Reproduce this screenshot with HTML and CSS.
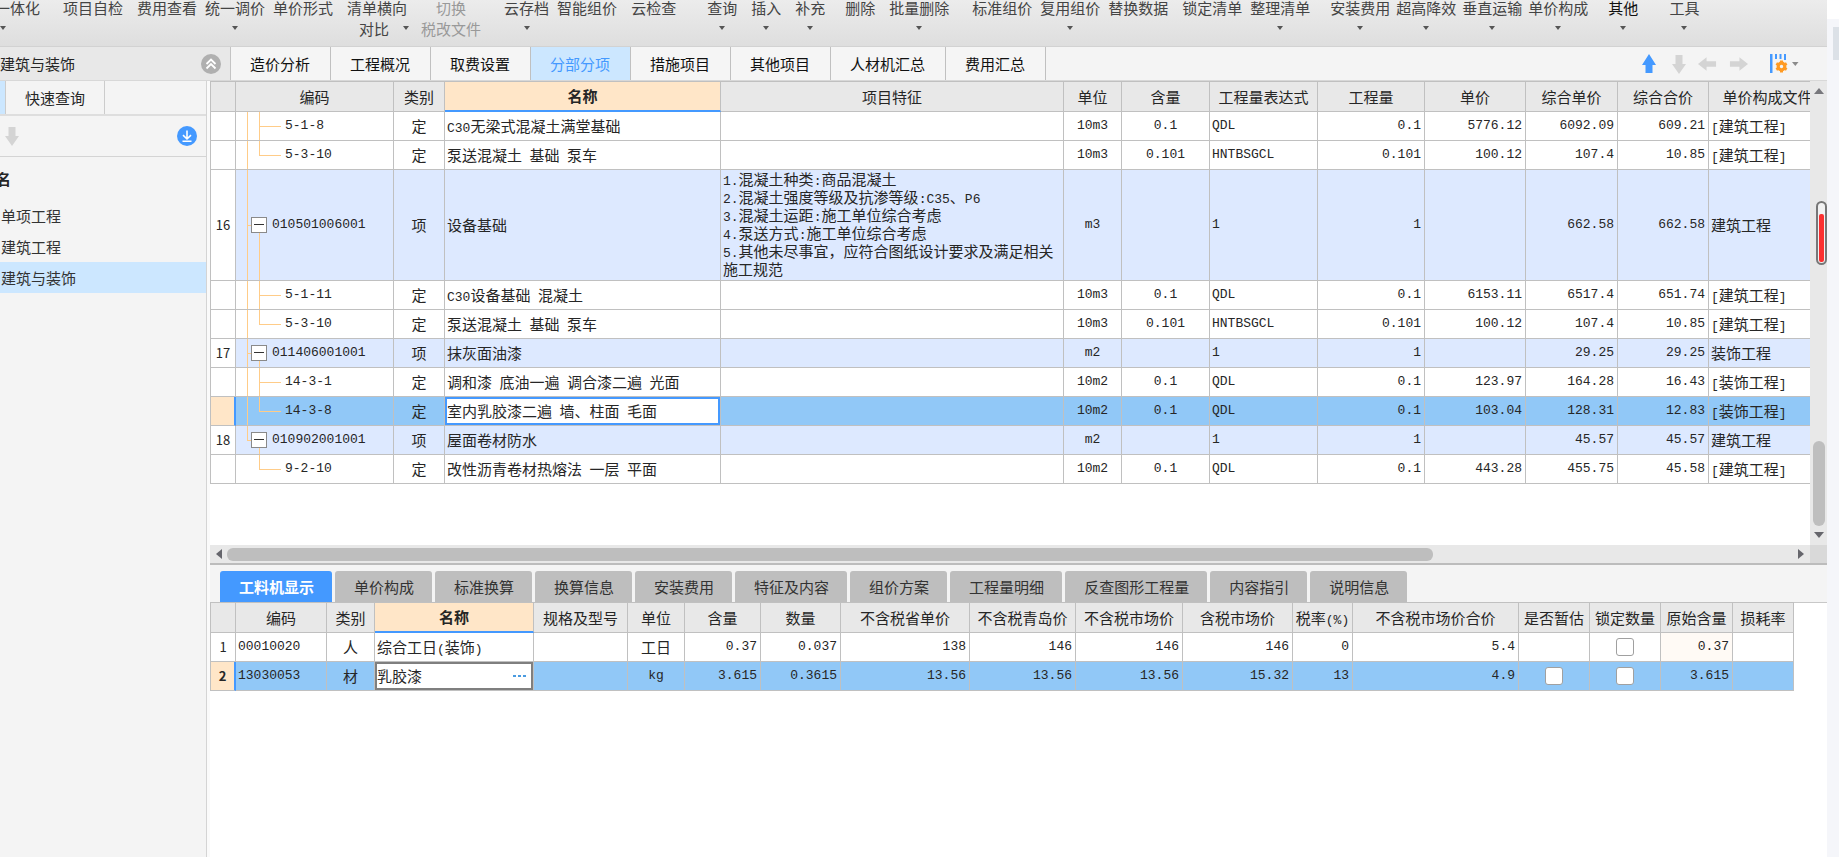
FILE: index.html
```html
<!DOCTYPE html>
<html lang="zh-CN">
<head>
<meta charset="utf-8">
<title>分部分项</title>
<link rel="stylesheet" href="styles.css">
</head>
<body>
<svg class="defs" width="0" height="0" aria-hidden="true">
  <symbol id="up" viewBox="0 0 14 20"><path d="M7 0 L14 11 H10.500 V19 H3.500 V11 H0 Z"/></symbol>
  <symbol id="down" viewBox="0 0 14 20"><path d="M7 20 L14 10 H10.500 V1 H3.500 V10 H0 Z"/></symbol>
  <symbol id="left" viewBox="0 0 20 14"><path d="M0 7 L9 0 V4 H19 V10 H9 V14 Z"/></symbol>
  <symbol id="right" viewBox="0 0 20 14"><path d="M20 7 L11 0 V4 H1 V10 H11 V14 Z"/></symbol>
</svg>
<div class="page">
<div class="app">
  <nav class="ribbon">
    <button>一体化<i class="caret early"></i></button>
    <button class="gm">项目自检</button>
    <button class="gs">费用查看</button>
    <button class="gb">统一调价<i class="caret"></i></button>
    <button class="gb">单价形式</button>
    <button class="gs two">清单横向<span class="second">对比<i class="caret beside"></i></span></button>
    <button class="gs" disabled>切换<span class="second">税改文件</span></button>
    <button class="gm">云存档<i class="caret"></i></button>
    <button class="gb">智能组价</button>
    <button class="gs">云检查</button>
    <button class="gl">查询<i class="caret"></i></button>
    <button class="gs">插入<i class="caret"></i></button>
    <button class="gs">补充<i class="caret"></i></button>
    <button class="gn">删除</button>
    <button class="gs">批量删除<i class="caret"></i></button>
    <button class="gm">标准组价</button>
    <button class="gb">复用组价<i class="caret"></i></button>
    <button class="gb">替换数据</button>
    <button class="gs">锁定清单</button>
    <button class="gb">整理清单<i class="caret"></i></button>
    <button class="gn">安装费用<i class="caret"></i></button>
    <button>超高降效<i class="caret"></i></button>
    <button>垂直运输<i class="caret"></i></button>
    <button>单价构成<i class="caret"></i></button>
    <button class="gn dark">其他<i class="caret"></i></button>
    <button class="gl">工具<i class="caret"></i></button>
  </nav>

  <div class="tabbar">
    <div class="project">
      <span>建筑与装饰</span>
      <button aria-label="收起"><svg width="20" height="20" viewBox="0 0 20 20"><circle cx="10" cy="10" r="10" fill="#b0b0b0"/><path d="M5.500 10 L10 5.500 L14.500 10 M5.500 14.500 L10 10 L14.500 14.500" fill="none" stroke="#fff" stroke-width="1.800"/></svg></button>
    </div>
    <div class="tabs">
      <button>造价分析</button><button>工程概况</button><button>取费设置</button><button class="on">分部分项</button><button>措施项目</button><button>其他项目</button><button>人材机汇总</button><button>费用汇总</button>
    </div>
    <div class="tools">
      <button class="blue" aria-label="上移"><svg width="14" height="20"><use href="#up"/></svg></button>
      <button aria-label="下移"><svg width="14" height="20"><use href="#down"/></svg></button>
      <button aria-label="左移"><svg width="19" height="14"><use href="#left"/></svg></button>
      <button aria-label="右移"><svg width="19" height="14"><use href="#right"/></svg></button>
      <button class="setup" aria-label="列设置"><svg width="29" height="20" viewBox="0 0 29 20"><path d="M0 0h2.500v19H0zM5 0h2v5H5zM9.500 0h2v5h-2zM14 0h2v6h-2z" fill="#49f"/><circle cx="11.500" cy="12.500" r="3.300" fill="none" stroke="#ff9a22" stroke-width="3.200"/><path d="M11.500 6.500v2.500M11.500 16v2.500M6.300 9.500l2.200 1.200M14.500 14.300l2.200 1.200M6.300 15.500l2.200-1.200M14.500 10.700l2.200-1.200" stroke="#ff9a22" stroke-width="3"/><path d="M22 8h6.500l-3.200 4z" fill="#8a8a8a"/></svg></button>
    </div>
  </div>

  <div class="work">
    <aside class="side">
      <div class="sidetabs"><span class="prev"></span><button>快速查询</button></div>
      <div class="sidetools">
        <button aria-label="下移"><svg width="14" height="20"><use href="#down"/></svg></button>
        <button aria-label="展开"><svg width="20" height="20" viewBox="0 0 20 20"><circle cx="10" cy="10" r="10" fill="#49f"/><path d="M10 4.500V13M6 9.200L10 13L14 9.200M5.500 15.200H14.500" fill="none" stroke="#fff" stroke-width="1.600"/></svg></button>
      </div>
      <h2>名</h2>
      <ul>
        <li><a href="#">单项工程</a></li>
        <li><a href="#">建筑工程</a></li>
        <li><a href="#" class="on">建筑与装饰</a></li>
      </ul>
    </aside>

    <main>
      <section class="upper">
        <div class="gridwrap">
          <table class="bill">
            <colgroup><col class="c-no"><col class="c-code"><col class="c-kind"><col class="c-name"><col class="c-feat"><col class="c-unit"><col class="c-cont"><col class="c-expr"><col class="c-qty"><col class="c-price"><col class="c-comp"><col class="c-total"><col class="c-file"></colgroup>
            <thead><tr><th></th><th>编码</th><th>类别</th><th class="on">名称</th><th>项目特征</th><th>单位</th><th>含量</th><th>工程量表达式</th><th>工程量</th><th>单价</th><th>综合单价</th><th>综合合价</th><th>单价构成文件</th></tr></thead>
            <tbody>
              <tr><td class="no"></td><td class="n kid">5-1-8</td><td class="c">定</td><td><span class="n">C30</span>无梁式混凝土满堂基础</td><td></td><td class="n c">10m3</td><td class="n c">0.1</td><td class="n">QDL</td><td class="n r">0.1</td><td class="n r">5776.12</td><td class="n r">6092.09</td><td class="n r">609.21</td><td><span class="n">[</span>建筑工程<span class="n">]</span></td></tr>
              <tr><td class="no"></td><td class="n kid end">5-3-10</td><td class="c">定</td><td>泵送混凝土&ensp;基础&ensp;泵车</td><td></td><td class="n c">10m3</td><td class="n c">0.101</td><td class="n">HNTBSGCL</td><td class="n r">0.101</td><td class="n r">100.12</td><td class="n r">107.4</td><td class="n r">10.85</td><td><span class="n">[</span>建筑工程<span class="n">]</span></td></tr>
              <tr class="item"><td class="no">16</td><td class="n node"><button aria-label="折叠"></button>010501006001</td><td class="c">项</td><td>设备基础</td><td class="feat"><span class="n">1.</span>混凝土种类<span class="n">:</span>商品混凝土<br><span class="n">2.</span>混凝土强度等级及抗渗等级<span class="n">:C35</span>、<span class="n">P6</span><br><span class="n">3.</span>混凝土运距<span class="n">:</span>施工单位综合考虑<br><span class="n">4.</span>泵送方式<span class="n">:</span>施工单位综合考虑<br><span class="n">5.</span>其他未尽事宜，应符合图纸设计要求及满足相关施工规范</td><td class="n c">m3</td><td></td><td class="n">1</td><td class="n r">1</td><td></td><td class="n r">662.58</td><td class="n r">662.58</td><td>建筑工程</td></tr>
              <tr><td class="no"></td><td class="n kid">5-1-11</td><td class="c">定</td><td><span class="n">C30</span>设备基础&ensp;混凝土</td><td></td><td class="n c">10m3</td><td class="n c">0.1</td><td class="n">QDL</td><td class="n r">0.1</td><td class="n r">6153.11</td><td class="n r">6517.4</td><td class="n r">651.74</td><td><span class="n">[</span>建筑工程<span class="n">]</span></td></tr>
              <tr><td class="no"></td><td class="n kid end">5-3-10</td><td class="c">定</td><td>泵送混凝土&ensp;基础&ensp;泵车</td><td></td><td class="n c">10m3</td><td class="n c">0.101</td><td class="n">HNTBSGCL</td><td class="n r">0.101</td><td class="n r">100.12</td><td class="n r">107.4</td><td class="n r">10.85</td><td><span class="n">[</span>建筑工程<span class="n">]</span></td></tr>
              <tr class="item"><td class="no">17</td><td class="n node"><button aria-label="折叠"></button>011406001001</td><td class="c">项</td><td>抹灰面油漆</td><td></td><td class="n c">m2</td><td></td><td class="n">1</td><td class="n r">1</td><td></td><td class="n r">29.25</td><td class="n r">29.25</td><td>装饰工程</td></tr>
              <tr><td class="no"></td><td class="n kid">14-3-1</td><td class="c">定</td><td>调和漆&ensp;底油一遍&ensp;调合漆二遍&ensp;光面</td><td></td><td class="n c">10m2</td><td class="n c">0.1</td><td class="n">QDL</td><td class="n r">0.1</td><td class="n r">123.97</td><td class="n r">164.28</td><td class="n r">16.43</td><td><span class="n">[</span>装饰工程<span class="n">]</span></td></tr>
              <tr class="sel"><td class="no"></td><td class="n kid end">14-3-8</td><td class="c">定</td><td class="edit"><input type="text" aria-label="名称" value="室内乳胶漆二遍&ensp;墙、柱面&ensp;毛面"></td><td></td><td class="n c">10m2</td><td class="n c">0.1</td><td class="n">QDL</td><td class="n r">0.1</td><td class="n r">103.04</td><td class="n r">128.31</td><td class="n r">12.83</td><td><span class="n">[</span>装饰工程<span class="n">]</span></td></tr>
              <tr class="item"><td class="no">18</td><td class="n node lastnode"><button aria-label="折叠"></button>010902001001</td><td class="c">项</td><td>屋面卷材防水</td><td></td><td class="n c">m2</td><td></td><td class="n">1</td><td class="n r">1</td><td></td><td class="n r">45.57</td><td class="n r">45.57</td><td>建筑工程</td></tr>
              <tr><td class="no"></td><td class="n kid only">9-2-10</td><td class="c">定</td><td>改性沥青卷材热熔法&ensp;一层&ensp;平面</td><td></td><td class="n c">10m2</td><td class="n c">0.1</td><td class="n">QDL</td><td class="n r">0.1</td><td class="n r">443.28</td><td class="n r">455.75</td><td class="n r">45.58</td><td><span class="n">[</span>建筑工程<span class="n">]</span></td></tr>
            </tbody>
          </table>
        </div>
        <div class="vbar"><i class="tri t-up"></i><div class="vtrack"><div class="thumb"></div></div><i class="tri t-down"></i><div class="marker"><div></div></div></div>
        <div class="hbar"><i class="tri t-left"></i><div class="htrack"><div class="thumb"></div></div><i class="tri t-right"></i></div>
        <div class="corner"></div>
      </section>

      <div class="lowtabs">
        <button class="on">工料机显示</button><button>单价构成</button><button>标准换算</button><button>换算信息</button><button>安装费用</button><button>特征及内容</button><button>组价方案</button><button>工程量明细</button><button>反查图形工程量</button><button>内容指引</button><button>说明信息</button>
      </div>
      <section class="lower">
        <table class="parts">
          <colgroup><col class="p-no"><col class="p-code"><col class="p-kind"><col class="p-name"><col class="p-spec"><col class="p-unit"><col class="p-cont"><col class="p-qty"><col class="p-prov"><col class="p-qd"><col class="p-mkt"><col class="p-tax"><col class="p-rate"><col class="p-sum"><col class="p-tick"><col class="p-tick"><col class="p-orig"><col class="p-loss"></colgroup>
          <thead><tr><th></th><th>编码</th><th>类别</th><th class="on">名称</th><th>规格及型号</th><th>单位</th><th>含量</th><th>数量</th><th>不含税省单价</th><th>不含税青岛价</th><th>不含税市场价</th><th>含税市场价</th><th>税率<span class="n">(%)</span></th><th>不含税市场价合价</th><th>是否暂估</th><th>锁定数量</th><th>原始含量</th><th>损耗率</th></tr></thead>
          <tbody>
            <tr><td class="no">1</td><td class="n">00010020</td><td class="c">人</td><td>综合工日<span class="n">(</span>装饰<span class="n">)</span></td><td></td><td class="c">工日</td><td class="n r">0.37</td><td class="n r">0.037</td><td class="n r">138</td><td class="n r">146</td><td class="n r">146</td><td class="n r">146</td><td class="n r">0</td><td class="n r">5.4</td><td></td><td class="c"><input type="checkbox" aria-label="锁定数量"></td><td class="n r warm">0.37</td><td></td></tr>
            <tr class="sel"><td class="no">2</td><td class="n">13030053</td><td class="c">材</td><td class="edit grey"><div><input type="text" aria-label="名称" value="乳胶漆"><button aria-label="选择"><svg width="14" height="4" viewBox="0 0 14 4"><path d="M0 1h3v2H0zM5 1h3v2H5zM10 1h3v2h-3z" fill="#4a9be0"/></svg></button></div></td><td></td><td class="n c">kg</td><td class="n r">3.615</td><td class="n r">0.3615</td><td class="n r">13.56</td><td class="n r">13.56</td><td class="n r">13.56</td><td class="n r">15.32</td><td class="n r">13</td><td class="n r">4.9</td><td class="c"><input type="checkbox" aria-label="是否暂估"></td><td class="c"><input type="checkbox" aria-label="锁定数量"></td><td class="n r">3.615</td><td></td></tr>
          </tbody>
        </table>
      </section>
    </main>
  </div>
</div>
<div class="edge"><div></div></div>
</div>
</body>
</html>
```
FILE: styles.css
```css
* { box-sizing: border-box; }
body {
  margin: 0;
  font: 15px/20px "Noto Sans CJK SC", sans-serif;
  color: #262626;
  background: #f4f4f4;
}
button {
  font: inherit;
  color: inherit;
  background: none;
  border: 0;
  padding: 0;
  margin: 0;
  white-space: nowrap;
}
svg { display: block; }
.defs { position: absolute; }
.page { display: flex; min-height: 100vh; overflow: hidden; }
.app { flex: 1; min-width: 0; display: flex; flex-direction: column; }

/* ribbon */
.ribbon {
  display: flex;
  align-items: flex-start;
  height: 47px;
  margin-left: -8px;
  background: linear-gradient(#ececec, #dedede);
  border-bottom: 1px solid #d2d2d2;
}
.ribbon button {
  display: flex;
  flex-direction: column;
  align-items: center;
  flex: none;
  padding: 0 3px;
  line-height: 16px;
  color: #444;
}
.ribbon .dark { color: #111; }
.ribbon button:disabled { color: #999; }
.ribbon .gb { margin-left: 2px; }
.ribbon .gs { margin-left: 8px; }
.ribbon .gn { margin-left: 14px; }
.ribbon .gm { margin-left: 17px; }
.ribbon .gl { margin-left: 25px; }
.caret {
  margin-top: 10px;
  border: 3px solid transparent;
  border-top: 4px solid #555;
  border-bottom: 0;
}
.caret.early { align-self: flex-start; margin-left: 5px; }
.second { display: flex; align-items: center; margin-top: 5px; }
.two { width: 66px; }
.two .second { padding-left: 14px; }
.caret.beside { margin: 0 0 3px 14px; }

/* page tabs */
.tabbar { display: flex; height: 34px; background: #f4f4f4; border-bottom: 1px solid #d8d8d8; }
.project {
  display: flex;
  align-items: center;
  justify-content: space-between;
  width: 231px;
  padding-right: 9px;
  background: #e8e8e8;
  border-right: 1px solid #c4c4c4;
}
.tabs { display: flex; }
.tabs button { padding: 1px 20px 0 19px; border-right: 1px solid #c0c0c0; color: #111; background: #f5f5f5; }
.tabs .on { background: #cce7ff; color: #49f; padding-top: 0; }
.tools { display: flex; align-items: center; gap: 12px; margin-left: auto; padding-right: 28px; }
.tools button { fill: #d4d4d4; }
.tools button:nth-child(2) { margin-left: 4px; }
.tools .blue { fill: #49f; }
.tools .setup { margin-left: 10px; }

.work { flex: 1; display: flex; }

/* project tree */
.side { width: 210px; flex: none; border-right: 3px solid #fafafa; box-shadow: inset -1px 0 #d4d4d4; }
.sidetabs { display: flex; height: 35px; margin-right: 1px; border-bottom: 2px solid #dedede; }
.prev { width: 5px; background: #cce7ff; }
.sidetabs button { padding: 0 19px; border: 1px solid #ccc; border-width: 0 1px; }
.sidetools {
  display: flex;
  align-items: center;
  justify-content: space-between;
  height: 41px;
  padding: 0 9px 0 5px;
  margin-right: 1px;
  border-bottom: 1px solid #d4d4d4;
}
.sidetools button { fill: #d4d4d4; }
.side h2 { margin: 0; padding: 11px 0; margin-left: -4px; font-size: 15px; line-height: 21px; }
.side ul { list-style: none; margin: 0 1px 0 0; padding: 0; }
.side a { display: block; padding-left: 1px; line-height: 31px; color: #333; text-decoration: none; }
.side .on { background: #cce7ff; }

main { flex: 1; min-width: 0; display: flex; flex-direction: column; }

/* tables */
table { table-layout: fixed; width: 0; border-spacing: 0; border: 1px solid #c0c0c0; border-width: 1px 0 0 1px; }
th, td {
  height: 29px;
  padding: 0 3px 0 2px;
  border: 1px solid #c0c0c0;
  border-width: 0 1px 1px 0;
  line-height: 18px;
  white-space: nowrap;
  text-align: left;
  overflow: hidden;
}
th { height: 30px; padding: 0; background: #e8e8e8; font-weight: 400; text-align: center; }
th.on { background: #ffe6c8; font-weight: 700; border-bottom: 2px solid #49f; }
.n { font-family: "Liberation Mono", "Noto Sans CJK SC", monospace; font-size: 13px; }
span.n { line-height: 1; }
.c { text-align: center; padding: 0; }
.r { text-align: right; }
.no { padding: 0; text-align: center; font-size: 13px; background: #fff; }
tr.item { background: #dde9ff; }
tr.sel { background: #91c8f7; }
tr.sel .no { background: #ffe6c8; border-right: 2px solid #49f; font-weight: 700; }
td.feat { white-space: normal; padding: 0 2px 2px; }
.warm { background: #fffaf5; }
td.edit { padding: 0; }
input { font: inherit; color: inherit; margin: 0; }
.edit input { display: block; width: 100%; height: 28px; padding: 0 0 2px; background: #fff; border: 2px solid #49f; outline: 0; }
.edit div { display: flex; align-items: center; height: 28px; background: #fff; border: 2px solid #7f7f7f; }
.edit.grey input { flex: 1; min-width: 0; height: 24px; border: 0; }
.edit.grey button { padding: 0 4px; }
input[type="checkbox"] {
  appearance: none;
  display: block;
  width: 18px;
  height: 18px;
  margin: 0 auto;
  background: #fff;
  border: 1px solid #a0a0a0;
  border-radius: 3px;
}

/* tree guides */
.kid, .node { background-repeat: no-repeat; --g: linear-gradient(#fc8, #fc8); }
td.kid {
  padding-left: 49px;
  background-image: var(--g), var(--g), var(--g);
  background-position: 11px 0, 23px 0, 23px 50%;
  background-size: 1px 100%, 1px 100%, 22px 1px;
}
td.kid.end { background-size: 1px 100%, 1px 50%, 22px 1px; }
td.kid.only { background-size: 0 0, 1px 50%, 22px 1px; }
td.node {
  padding-left: 15px;
  background-image: var(--g), var(--g), var(--g);
  background-position: 11px 0, 23px 100%, 11px 50%;
  background-size: 1px 100%, 1px 50%, 5px 1px;
}
td.lastnode { background-size: 1px 50%, 1px 50%, 5px 1px; }
.node button {
  display: inline-block;
  width: 16px;
  height: 16px;
  margin-right: 5px;
  vertical-align: middle;
  border: 1px solid #8a8a8a;
  background: linear-gradient(#333, #333) center / 10px 1px no-repeat #fff;
}

.c-no, .p-no { width: 25px; }
.c-code { width: 158px; }
.c-kind { width: 51px; }
.c-name { width: 276px; }
.c-feat { width: 343px; }
.c-unit { width: 58px; }
.c-cont { width: 88px; }
.c-expr { width: 108px; }
.c-qty { width: 107px; }
.c-price { width: 101px; }
.c-comp { width: 92px; }
.c-total { width: 91px; }
.c-file { width: 118px; }
.p-code { width: 91px; }
.p-kind { width: 48px; }
.p-name { width: 159px; }
.p-spec { width: 94px; }
.p-unit { width: 57px; }
.p-cont { width: 76px; }
.p-qty { width: 80px; }
.p-prov { width: 129px; }
.p-qd { width: 106px; }
.p-mkt { width: 107px; }
.p-tax { width: 110px; }
.p-rate { width: 60px; }
.p-sum { width: 166px; }
.p-tick { width: 71px; }
.p-orig { width: 72px; }
.p-loss { width: 61px; }

/* upper pane with its scroll bars */
.upper { display: grid; grid-template-columns: minmax(0, 1fr) 17px; border-bottom: 2px solid #bcbcbc; }
.gridwrap { overflow: hidden; padding-bottom: 61px; background: #fff; }
.vbar { position: relative; display: flex; flex-direction: column; align-items: center; padding: 7px 0; background: #e8e8e8; }
.vtrack { flex: 1; display: flex; align-items: flex-end; padding: 6px 0; }
.vtrack .thumb { width: 12px; height: 20%; }
.hbar { display: flex; align-items: center; height: 18px; padding: 0 6px; background: #e8e8e8; }
.htrack { flex: 1; padding: 0 5px; }
.htrack .thumb { width: 77%; height: 13px; }
.thumb { background: #bebebe; border-radius: 6px; }
.corner { background: #d9d9d9; }
.tri { border: 5px solid transparent; }
.t-up { border-top: 0; border-bottom: 6px solid #77777c; }
.t-down { border-bottom: 0; border-top: 6px solid #66666c; }
.t-left { border-left: 0; border-right: 6px solid #66666c; }
.t-right { border-right: 0; border-left: 6px solid #66666c; }
.marker { position: absolute; top: 120px; right: 0; width: 11px; height: 64px; padding: 11px 1px 1px; border: 2px solid #777; border-radius: 6px; background: #f2f2f2; }
.marker div { height: 100%; background: #fb3030; border-radius: 2px; }

/* lower pane */
.lowtabs { display: flex; gap: 3px; padding: 6px 10px 0; }
.lowtabs button { height: 31px; padding: 0 18px 0 19px; border-radius: 3px 3px 0 0; background: #bebebe; color: #333; }
.lowtabs .on { background: #49f; color: #fff; font-weight: 700; }
.lower { flex: 1; background: #fff; box-shadow: inset 0 1px #c8c8c8; }

/* strip beyond the window */
.edge { width: 12px; padding: 27px 0 0 6px; background: linear-gradient(#fff 19px, #f5f6fa 19px); }
.edge div { height: 33px; background: #dce1e7; }
```
